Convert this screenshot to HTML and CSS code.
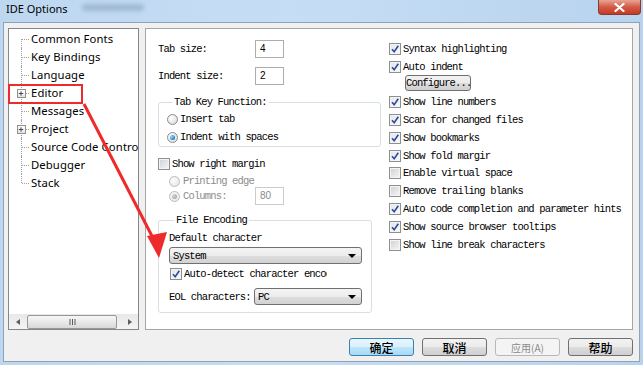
FILE: index.html
```html
<!DOCTYPE html>
<html lang="en">
<head>
  <meta charset="UTF-8">
  <title>IDE Options</title>
  <link rel="stylesheet" href="styles.css">
</head>
<body>

<div class="window">
  <div class="titlebar">
    <span class="title">IDE Options</span>
    <span class="ghost"></span>
    <span class="close">
      <svg width="11" height="9" viewBox="0 0 11 9"><path d="M1.5 1 L9.5 8 M9.5 1 L1.5 8" stroke="#fff" stroke-width="2.2" stroke-linecap="round"/></svg>
    </span>
  </div>

  <div class="client">
    <div class="main">

      <!-- category tree -->
      <div class="tree">
        <ul class="tree-list">
          <li>Common Fonts</li>
          <li>Key Bindings</li>
          <li>Language</li>
          <li><span class="exp"><svg width="9" height="9" viewBox="0 0 9 9"><path d="M2 4.5 H7 M4.5 2 V7" stroke="#3a3a3a" stroke-width="1"/></svg></span>Editor</li>
          <li>Messages</li>
          <li><span class="exp"><svg width="9" height="9" viewBox="0 0 9 9"><path d="M2 4.5 H7 M4.5 2 V7" stroke="#3a3a3a" stroke-width="1"/></svg></span>Project</li>
          <li>Source Code Control</li>
          <li>Debugger</li>
          <li>Stack</li>
        </ul>
        <div class="hscroll">
          <span class="arr arr-l"><i></i></span>
          <span class="thumb">
            <svg width="7" height="6" viewBox="0 0 7 6"><path d="M1 0 V6 M3.5 0 V6 M6 0 V6" stroke="#5a5a5a" stroke-width="1"/></svg>
          </span>
          <span class="arr arr-r"><i></i></span>
        </div>
      </div>

      <!-- editor page -->
      <div class="page">
        <div class="col-left">
          <div class="field"><label>Tab size:</label><span class="num">4</span></div>
          <div class="field"><label>Indent size:</label><span class="num">2</span></div>

          <div class="group group-tab">
            <span class="legend">Tab Key Function:</span>
            <div class="opt first"><span class="rb"></span>Insert tab</div>
            <div class="opt"><span class="rb on"></span>Indent with spaces</div>
          </div>

          <div class="opt margin-row"><span class="cb"></span>Show right margin</div>
          <div class="opt sub pe-row disabled"><span class="rb off"></span>Printing edge</div>
          <div class="opt sub col-row disabled"><span class="rb on off"></span><label>Columns:</label><span class="num dim">80</span></div>

          <div class="group group-enc">
            <span class="legend">File Encoding</span>
            <div class="enc-label">Default character</div>
            <div class="combo combo-wide"><span>System</span><i class="caret"></i></div>
            <div class="opt enc-check"><span class="cb on"><svg width="10" height="10" viewBox="0 0 10 10"><path d="M2 5.2 L4.2 7.8 L8.3 1.8" stroke="#2a4a9c" stroke-width="1.6" fill="none"/></svg></span><span class="clip">Auto-detect character encoding</span></div>
            <div class="eol-row"><label>EOL characters:</label><div class="combo combo-eol"><span>PC</span><i class="caret"></i></div></div>
          </div>
        </div>

        <div class="col-right">
          <div class="opt"><span class="cb on"><svg width="10" height="10" viewBox="0 0 10 10"><path d="M2 5.2 L4.2 7.8 L8.3 1.8" stroke="#2a4a9c" stroke-width="1.6" fill="none"/></svg></span>Syntax highlighting</div>
          <div class="opt"><span class="cb on"><svg width="10" height="10" viewBox="0 0 10 10"><path d="M2 5.2 L4.2 7.8 L8.3 1.8" stroke="#2a4a9c" stroke-width="1.6" fill="none"/></svg></span>Auto indent</div>
          <div class="btn-row"><span class="btn configure">Configure...</span></div>
          <div class="opt"><span class="cb on"><svg width="10" height="10" viewBox="0 0 10 10"><path d="M2 5.2 L4.2 7.8 L8.3 1.8" stroke="#2a4a9c" stroke-width="1.6" fill="none"/></svg></span>Show line numbers</div>
          <div class="opt"><span class="cb on"><svg width="10" height="10" viewBox="0 0 10 10"><path d="M2 5.2 L4.2 7.8 L8.3 1.8" stroke="#2a4a9c" stroke-width="1.6" fill="none"/></svg></span>Scan for changed files</div>
          <div class="opt"><span class="cb on"><svg width="10" height="10" viewBox="0 0 10 10"><path d="M2 5.2 L4.2 7.8 L8.3 1.8" stroke="#2a4a9c" stroke-width="1.6" fill="none"/></svg></span>Show bookmarks</div>
          <div class="opt"><span class="cb on"><svg width="10" height="10" viewBox="0 0 10 10"><path d="M2 5.2 L4.2 7.8 L8.3 1.8" stroke="#2a4a9c" stroke-width="1.6" fill="none"/></svg></span>Show fold margir</div>
          <div class="opt"><span class="cb"></span>Enable virtual space</div>
          <div class="opt"><span class="cb"></span>Remove trailing blanks</div>
          <div class="opt"><span class="cb on"><svg width="10" height="10" viewBox="0 0 10 10"><path d="M2 5.2 L4.2 7.8 L8.3 1.8" stroke="#2a4a9c" stroke-width="1.6" fill="none"/></svg></span>Auto code completion and parameter hints</div>
          <div class="opt"><span class="cb on"><svg width="10" height="10" viewBox="0 0 10 10"><path d="M2 5.2 L4.2 7.8 L8.3 1.8" stroke="#2a4a9c" stroke-width="1.6" fill="none"/></svg></span>Show source browser tooltips</div>
          <div class="opt"><span class="cb"></span>Show line break characters</div>
        </div>
      </div>
    </div>

    <div class="buttons">
      <span class="dlg-btn default">确定</span>
      <span class="dlg-btn">取消</span>
      <span class="dlg-btn disabled">应用(A)</span>
      <span class="dlg-btn">帮助</span>
    </div>
  </div>

  <!-- red annotation drawn over the dialog -->
  <svg class="annot" width="643" height="365" viewBox="0 0 643 365">
    <rect x="9" y="85" width="73" height="18" fill="none" stroke="#ee2a2a" stroke-width="2"/>
    <line x1="84" y1="104" x2="154" y2="240" stroke="#ee2a2a" stroke-width="3"/>
    <polygon points="159,258 147,236 167,232" fill="#ee2a2a"/>
  </svg>
</div>

</body>
</html>
```

FILE: styles.css
```css
* {
  margin: 0;
  padding: 0;
  box-sizing: border-box;
}

body {
  width: 643px;
  height: 365px;
  overflow: hidden;
  font-family: "Noto Sans", sans-serif;
  background-color: #bcd6ef;
}

.window {
  position: relative;
  width: 643px;
  height: 365px;
  display: flex;
  flex-direction: column;
  background: linear-gradient(90deg, #bdd7f1 0%, #c6def5 45%, #b8d3ee 100%);
}

/* title bar */
.titlebar {
  height: 22px;
  display: flex;
  align-items: flex-start;
  padding-left: 6px;
}

.title {
  font-size: 11px;
  line-height: 18px;
  color: #000;
}

.ghost {
  margin: 4px 0 0 14px;
  width: 62px;
  height: 7px;
  border-radius: 4px;
  background: rgba(90, 110, 135, 0.3);
  filter: blur(2px);
}

.close {
  margin-left: auto;
  margin-right: 2px;
  width: 43px;
  height: 15px;
  display: flex;
  align-items: center;
  justify-content: center;
  border: 1px solid #8a3a2c;
  border-top: none;
  border-radius: 0 0 4px 4px;
  background: linear-gradient(#e8a595, #d45a45 50%, #c23b27);
}

/* client area */
.client {
  margin: 0 3px;
  height: 340px;
  background-color: #f0f0f0;
  border: 1px solid #8fa2b6;
  padding: 5px 6px 0 4px;
  display: flex;
  flex-direction: column;
}

.main {
  display: flex;
  gap: 6px;
  height: 302px;
}

/* tree */
.tree {
  width: 131px;
  background-color: #fff;
  border: 1px solid #828790;
  display: flex;
  flex-direction: column;
  overflow: hidden;
}

.tree-list {
  list-style: none;
  flex: 1;
  padding-top: 1px;
}

.tree-list li {
  position: relative;
  height: 18px;
  line-height: 18px;
  padding-left: 22px;
  font-size: 11.3px;
  letter-spacing: 0.1px;
  color: #000;
  white-space: nowrap;
}

.tree-list li::before {
  content: "";
  position: absolute;
  left: 12px;
  top: 0;
  height: 18px;
  border-left: 1px dotted #a0a0a0;
}

.tree-list li:first-child::before {
  top: 9px;
  height: 9px;
}

.tree-list li:last-child::before {
  height: 9px;
}

.tree-list li::after {
  content: "";
  position: absolute;
  left: 13px;
  top: 9px;
  width: 7px;
  border-top: 1px dotted #a0a0a0;
}

.exp {
  position: absolute;
  left: 8px;
  top: 5px;
  width: 9px;
  height: 9px;
  z-index: 1;
  border: 1px solid #919191;
  background: linear-gradient(#fff, #e4e4e4);
  display: flex;
}

.exp svg {
  margin: -1px 0 0 -1px;
}

.hscroll {
  height: 15px;
  display: flex;
  align-items: center;
  background: linear-gradient(#e8e8e8, #f4f4f4);
}

.arr {
  width: 17px;
  height: 15px;
  display: flex;
  align-items: center;
  justify-content: center;
}

.arr i {
  width: 0;
  height: 0;
  border-top: 3px solid transparent;
  border-bottom: 3px solid transparent;
}

.arr-l i {
  border-right: 4px solid #5e5e5e;
}

.arr-r {
  margin-left: auto;
}

.arr-r i {
  border-left: 4px solid #5e5e5e;
}

.thumb {
  margin-left: 1px;
  width: 90px;
  height: 14px;
  display: flex;
  align-items: center;
  justify-content: center;
  border: 1px solid #979797;
  border-radius: 2px;
  background: linear-gradient(#f7f7f7, #e9e9e9 50%, #d8d8d8);
}

/* option page */
.page {
  width: 488px;
  background-color: #fff;
  border: 1px solid #a5a5a5;
  padding: 11px 0 0 12px;
  display: flex;
  gap: 8px;
  font-family: "Liberation Mono", monospace;
  font-size: 10.5px;
  letter-spacing: -0.85px;
  color: #000;
}

.col-left {
  width: 223px;
  display: flex;
  flex-direction: column;
}

.field {
  height: 18px;
  display: flex;
  align-items: center;
}

.field label {
  width: 97px;
}

.field + .field {
  margin-top: 9px;
}

.num {
  width: 29px;
  height: 18px;
  line-height: 16px;
  padding-left: 4px;
  border: 1px solid #abadb3;
  background-color: #fff;
  font-family: "Liberation Sans", sans-serif;
  font-size: 10px;
  letter-spacing: 0;
}

.num.dim {
  color: #8a8a8a;
  border-color: #c9cbd0;
}

.group {
  border: 1px solid #d5dfe5;
  border-radius: 3px;
  display: flex;
  flex-direction: column;
}

.legend {
  display: block;
  width: fit-content;
  margin: -7px 0 -6px 5px;
  padding: 0 2px;
  line-height: 13px;
  background-color: #fff;
}

.group-tab {
  margin-top: 17px;
  padding-left: 8px;
}

.group-tab .first {
  margin-top: 7px;
}

.opt {
  height: 18px;
  display: flex;
  align-items: center;
  white-space: nowrap;
}

.margin-row {
  margin-top: 8px;
}

.sub {
  padding-left: 11px;
}

.pe-row {
  height: 16px;
}

.col-row {
  margin-top: -2px;
}

.col-row label {
  width: 72px;
}

.disabled {
  color: #8d8d8d;
}

.group-enc {
  margin-top: 15px;
  width: 214px;
  padding: 0 9px 7px 10px;
}

.enc-label {
  margin-top: 9px;
  height: 16px;
  line-height: 16px;
}

.combo {
  height: 17px;
  display: flex;
  align-items: center;
  justify-content: space-between;
  padding: 0 5px 0 3px;
  border: 1px solid #707070;
  border-radius: 3px;
  background: linear-gradient(#f4f4f4, #ececec 50%, #dedede 51%, #d2d2d2);
}

.combo-wide {
  margin-top: 1px;
}

.caret {
  width: 0;
  height: 0;
  border-left: 4px solid transparent;
  border-right: 4px solid transparent;
  border-top: 4px solid #000;
}

.enc-check {
  margin-top: 2px;
  height: 16px;
  padding-left: 1px;
}

.clip {
  display: block;
  width: 143px;
  overflow: hidden;
}

.eol-row {
  margin-top: 6px;
  display: flex;
  align-items: center;
}

.eol-row label {
  width: 85px;
}

.combo-eol {
  flex: 1;
}

/* checkbox and radio */
.cb {
  flex: none;
  width: 12px;
  height: 12px;
  margin-right: 2px;
  display: flex;
  align-items: center;
  justify-content: center;
  border: 1px solid #8e8f8f;
  background: linear-gradient(135deg, #cfd1d4, #f6f6f6);
  box-shadow: inset 0 0 0 1px #f4f4f4;
}

.cb.on {
  background: linear-gradient(135deg, #e3e5e8, #fbfbfb);
}

.rb {
  position: relative;
  flex: none;
  width: 11px;
  height: 11px;
  margin-right: 2px;
  border-radius: 50%;
  border: 1px solid #8a8c8e;
  background: radial-gradient(circle at 35% 35%, #fff, #d4d6d8);
}

.sub .rb {
  margin-right: 3px;
}

.rb.on::after {
  content: "";
  position: absolute;
  left: 2px;
  top: 2px;
  width: 5px;
  height: 5px;
  border-radius: 50%;
  background: radial-gradient(circle at 35% 35%, #9fdcff, #1f7cc4 70%, #14518a);
}

.rb.off {
  border-color: #b9bbbd;
  background: radial-gradient(circle at 35% 35%, #fbfbfb, #e4e5e6);
}

.rb.on.off::after {
  background: radial-gradient(circle at 35% 35%, #d6d6d6, #9a9a9a);
}

.col-right {
  display: flex;
  flex-direction: column;
}

.col-right .opt {
  height: 17.8px;
}

.btn-row {
  height: 17.8px;
  padding-left: 16px;
}

.btn {
  display: block;
  overflow: hidden;
  white-space: nowrap;
  text-align: center;
  border: 1px solid #707070;
  border-radius: 3px;
  background: linear-gradient(#f2f2f2, #ebebeb 50%, #dddddd 51%, #cfcfcf);
}

.configure {
  margin-top: -1px;
  width: 66px;
  height: 16px;
  line-height: 14px;
}

/* dialog buttons */
.buttons {
  margin-top: 8px;
  display: flex;
  justify-content: flex-end;
  gap: 8px;
}

.dlg-btn {
  width: 65px;
  height: 18px;
  display: flex;
  align-items: center;
  justify-content: center;
  border: 1px solid #707070;
  border-radius: 3px;
  background: linear-gradient(#f2f2f2, #ebebeb 50%, #dddddd 51%, #cfcfcf);
  font-family: "Noto Sans CJK SC", sans-serif;
  font-size: 12px;
  font-weight: 500;
  color: #000;
}

.dlg-btn.default {
  border-color: #3c7fb1;
  background: linear-gradient(#eaf6fd, #d9f0fc 50%, #bee6fd 51%, #a7d9f5);
}

.dlg-btn.disabled {
  border-color: #b5b9bc;
  background: #f4f4f4;
  color: #8a8a8a;
  font-size: 10px;
  font-weight: 400;
}

.annot {
  position: absolute;
  top: 0;
  left: 0;
  pointer-events: none;
}
```
